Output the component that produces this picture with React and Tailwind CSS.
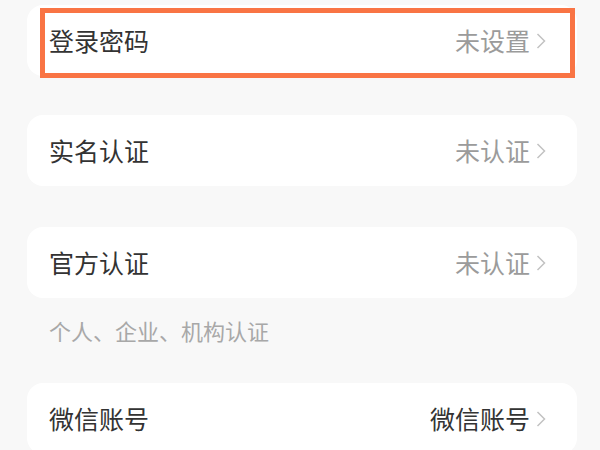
const font = { fontFamily: '"Noto Sans CJK SC", "Noto Sans", sans-serif' };

function Chevron() {
  return (
    <svg width="11" height="16" viewBox="0 0 11 16" className="flex-shrink-0">
      <path d="M2.5 1 L9.5 8 L2.5 15" fill="none" stroke="#c2c2c2" strokeWidth="1.5" />
    </svg>
  );
}

function Row({ title, value, dark }) {
  return (
    <div className="h-[71px] bg-white rounded-2xl flex items-center pl-[22px] pr-[31px]">
      <span className="flex-1 text-[25px] leading-none text-[#333333]">{title}</span>
      <span className={`text-[25px] leading-none mr-[5px] ${dark ? 'text-[#333333]' : 'text-[#9b9b9b]'}`}>{value}</span>
      <Chevron />
    </div>
  );
}

export default function App() {
  return (
    <div className="w-[600px] h-[450px] overflow-hidden bg-[#f8f8f8] pl-[27px] pr-[23px] pt-[5px]" style={font}>
      {/* Login password — highlighted */}
      <div className="relative">
        <Row title="登录密码" value="未设置" />
        <div className="absolute left-[13px] top-[3px] w-[535px] h-[70px] border-[5px] border-[#f97444] pointer-events-none" />
      </div>

      <div className="mt-[39px]">
        <Row title="实名认证" value="未认证" />
      </div>

      <div className="mt-[41px]">
        <Row title="官方认证" value="未认证" />
      </div>

      <div className="pl-[22px] pt-[18px] pb-[39px] text-[22px] leading-[28px] text-[#a8a8a8]">
        个人、企业、机构认证
      </div>

      <Row title="微信账号" value="微信账号" dark />
    </div>
  );
}
